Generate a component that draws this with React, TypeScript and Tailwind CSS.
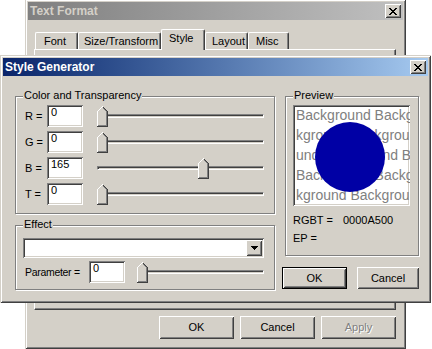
import React from 'react';

const raised =
  'shadow-[inset_1px_1px_0_#ffffff,inset_-1px_-1px_0_#404040,inset_2px_2px_0_#d4d0c8,inset_-2px_-2px_0_#808080]';
const sunken =
  'shadow-[inset_1px_1px_0_#808080,inset_-1px_-1px_0_#ffffff,inset_2px_2px_0_#404040,inset_-2px_-2px_0_#d4d0c8]';
const frame =
  'shadow-[inset_1px_1px_0_#d4d0c8,inset_-1px_-1px_0_#404040,inset_2px_2px_0_#ffffff,inset_-2px_-2px_0_#808080]';

function CloseButton() {
  const px = [
    [0, 0, 2], [6, 0, 2], [1, 1, 2], [5, 1, 2], [2, 2, 4], [3, 3, 2],
    [2, 4, 4], [1, 5, 2], [5, 5, 2], [0, 6, 2], [6, 6, 2],
  ];
  return (
    <div className={`flex h-[14px] w-[16px] items-center justify-center bg-[#d4d0c8] ${raised}`}>
      <svg width="8" height="7" viewBox="0 0 8 7" shapeRendering="crispEdges">
        {px.map(([x, y, w], i) => (
          <rect key={i} x={x} y={y} width={w} height={1} fill="#000" />
        ))}
      </svg>
    </div>
  );
}

function TitleBar({ title, active }: { title: string; active: boolean }) {
  return (
    <div
      className={`flex h-[18px] shrink-0 items-center justify-between px-[2px] ${
        active
          ? 'bg-linear-to-r from-[#0a246a] to-[#a6caf0] text-white'
          : 'bg-linear-to-r from-[#808080] to-[#c0c0c0] text-[#d4d0c8]'
      }`}
    >
      <span className="text-[12px] font-bold leading-[18px]">{title}</span>
      <CloseButton />
    </div>
  );
}

function Thumb() {
  const face = '#d4d0c8';
  const r = (x: number, y: number, w: number, h: number, c: string, k: string) => (
    <rect key={k} x={x} y={y} width={w} height={h} fill={c} />
  );
  return (
    <svg width="11" height="21" viewBox="0 0 11 21" shapeRendering="crispEdges">
      {[0, 1, 2, 3, 4].map((y) => r(5 - y, y, 2 * y + 1, 1, face, 'f' + y))}
      {r(0, 5, 11, 16, face, 'fb')}
      {[0, 1, 2, 3, 4].map((y) => r(5 - y, y, 1, 1, '#ffffff', 'w' + y))}
      {r(0, 5, 1, 15, '#ffffff', 'wl')}
      {[1, 2, 3, 4, 5].map((y) => r(5 + y, y, 1, 1, '#404040', 'd' + y))}
      {r(10, 5, 1, 16, '#404040', 'dr')}
      {r(0, 20, 11, 1, '#404040', 'db')}
      {[2, 3, 4, 5].map((y) => r(4 + y, y, 1, 1, '#808080', 'g' + y))}
      {r(9, 6, 1, 14, '#808080', 'gr')}
      {r(1, 19, 9, 1, '#808080', 'gb')}
    </svg>
  );
}

function Slider({ value, className }: { value: number; className: string }) {
  return (
    <div className={`relative flex h-[21px] items-center ${className}`}>
      <div className="h-[4px] w-full border border-t-[#808080] border-l-[#808080] border-r-white border-b-white bg-[#d4d0c8] shadow-[inset_1px_1px_0_#404040]" />
      <div className="absolute top-0 h-[21px]" style={{ left: `calc(${value / 255} * (100% - 11px))` }}>
        <Thumb />
      </div>
    </div>
  );
}

function Edit({ value, className = 'w-[36px]' }: { value: string; className?: string }) {
  return <div className={`h-[22px] shrink-0 bg-white pl-[4px] pt-[1px] leading-[13px] ${sunken} ${className}`}>{value}</div>;
}

function Button({
  label,
  className,
  isDefault = false,
  disabled = false,
}: {
  label: string;
  className: string;
  isDefault?: boolean;
  disabled?: boolean;
}) {
  return (
    <div className={`bg-[#d4d0c8] ${isDefault ? 'border border-black' : ''} ${className}`}>
      <div
        className={`flex h-full w-full items-center justify-center leading-[13px] ${raised} ${
          disabled ? 'text-[#808080] [text-shadow:1px_1px_0_#ffffff]' : ''
        }`}
      >
        {label}
      </div>
    </div>
  );
}

function Group({ label, className, children }: { label: string; className: string; children?: React.ReactNode }) {
  return (
    <div className={`relative border border-[#808080] shadow-[inset_1px_1px_0_#ffffff,1px_1px_0_#ffffff] ${className}`}>
      <span className="absolute -top-[8px] left-[7px] bg-[#d4d0c8] px-[1px] leading-[13px]">{label}</span>
      {children}
    </div>
  );
}

function BackWindow() {
  const tabs = [
    { label: 'Font', w: 'w-[43px]', pl: 'pl-[8px]' },
    { label: 'Size/Transform', w: 'w-[83px]', pl: 'pl-[5px]' },
    { label: 'Style', w: 'w-[44px]', pl: 'pl-[7px]', selected: true },
    { label: 'Layout', w: 'w-[43px]', pl: 'pl-[6px]' },
    { label: 'Misc', w: 'w-[41px]', pl: 'pl-[7px]' },
  ];
  return (
    <div className={`absolute left-[25px] top-[-1px] flex h-[350px] w-[381px] flex-col bg-[#d4d0c8] p-[3px] ${frame}`}>
      <TitleBar title="Text Format" active={false} />
      <div className="mt-[9px] flex h-[20px] items-end pl-[7px]">
        {tabs.map((t) => (
          <div
            key={t.label}
            className={`${t.w} ${t.pl} rounded-t-[2px] border-t border-l border-r border-t-white border-l-white border-r-[#404040] bg-[#d4d0c8] pt-[2px] leading-[13px] shadow-[inset_-1px_0_0_#808080] ${
              t.selected ? 'relative z-10 -mb-[1px] h-[21px]' : 'h-[17px]'
            }`}
          >
            {t.label}
          </div>
        ))}
      </div>
      <div className="ml-[6px] mr-[7px] h-[261px] shrink-0 border border-t-white border-l-white border-r-[#404040] border-b-[#404040] shadow-[inset_-1px_-1px_0_#808080]" />
      <div className="mt-[6px] flex justify-end gap-[6px] pr-[7px]">
        <Button label="OK" className="h-[23px] w-[75px]" />
        <Button label="Cancel" className="h-[23px] w-[75px]" />
        <Button label="Apply" className="h-[23px] w-[75px]" disabled />
      </div>
    </div>
  );
}

function FrontWindow() {
  const rows = [
    { label: 'R =', value: 0 },
    { label: 'G =', value: 0 },
    { label: 'B =', value: 165 },
    { label: 'T =', value: 0 },
  ];
  const lines = [
    'Background Background',
    'kground Background',
    'und Background B',
    'Background Background',
    'kground Background',
  ];
  return (
    <div className={`absolute left-0 top-[55px] flex h-[248px] w-[431px] flex-col bg-[#d4d0c8] p-[3px] ${frame}`}>
      <TitleBar title="Style Generator" active />
      <div className="mt-[20px] flex gap-[10px] pl-[12px]">
        <div className="flex w-[260px] flex-col gap-[11px]">
          <Group label="Color and Transparency" className="h-[118px] pl-[9px] pt-[8px]">
            <div className="grid grid-cols-[22px_36px_181px] gap-y-[4px]">
              {rows.map((r) => (
                <React.Fragment key={r.label}>
                  <div className="flex h-[22px] items-center leading-[13px]">{r.label}</div>
                  <Edit value={String(r.value)} />
                  <div className="flex h-[22px] items-center pl-[14px]">
                    <Slider value={r.value} className="w-full" />
                  </div>
                </React.Fragment>
              ))}
            </div>
          </Group>
          <Group label="Effect" className="h-[65px] pl-[7px] pt-[12px]">
            <div className={`flex h-[20px] w-[241px] justify-end bg-white p-[2px] ${sunken}`}>
              <div className={`flex h-[16px] w-[16px] items-center justify-center bg-[#d4d0c8] ${raised}`}>
                <svg width="7" height="4" viewBox="0 0 7 4" shapeRendering="crispEdges">
                  <path d="M0 0h7v1h-7zM1 1h5v1h-5zM2 2h3v1h-3zM3 3h1v1h-1z" fill="#000" />
                </svg>
              </div>
            </div>
            <div className="mt-[3px] flex items-center pl-[2px]">
              <div className="w-[64px] shrink-0 whitespace-nowrap text-[10.5px] leading-[13px] tracking-[-0.3px]">
                Parameter =
              </div>
              <Edit value="0" />
              <Slider value={0} className="ml-[12px] w-[127px]" />
            </div>
          </Group>
        </div>
        <div className="flex w-[134px] flex-col">
          <Group label="Preview" className="h-[160px] pl-[7px] pt-[8px]">
            <div
              className={`relative h-[101px] w-[117px] overflow-hidden bg-white pl-[3px] text-[14px] leading-[20px] text-[#808080] ${sunken}`}
            >
              {lines.map((l, i) => (
                <div key={i} className="whitespace-nowrap">
                  {l}
                </div>
              ))}
              <div className="absolute left-[22px] top-[17px] h-[70px] w-[70px] rounded-full bg-[#0000a5]" />
            </div>
            <div className="mt-[5px] flex leading-[18px]">
              <span className="w-[50px]">RGBT =</span>
              <span>0000A500</span>
            </div>
            <div className="leading-[18px]">EP =</div>
          </Group>
          <div className="-ml-[3px] mt-[11px] flex gap-[10px]">
            <Button label="OK" className="h-[22px] w-[65px]" isDefault />
            <Button label="Cancel" className="h-[22px] w-[62px]" />
          </div>
        </div>
      </div>
    </div>
  );
}

export default function App() {
  return (
    <div className="relative h-[349px] w-[432px] overflow-hidden bg-white font-['Liberation_Sans',Arial,sans-serif] text-[11px] text-black">
      <BackWindow />
      <FrontWindow />
    </div>
  );
}
